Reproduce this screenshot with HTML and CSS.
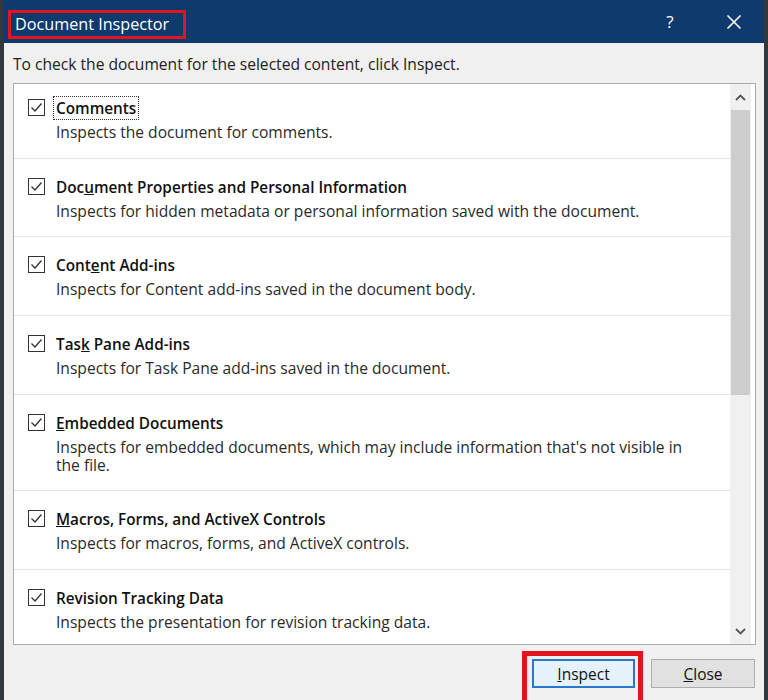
FILE: index.html
```html
<!DOCTYPE html>
<html>
<head>
<meta charset="utf-8">
<link rel="stylesheet" href="styles.css">
</head>
<body>
<div class="dialog">
  <div class="titlebar">
    <span class="title-mark">Document Inspector</span>
    <span class="spacer"></span>
    <span class="help">?</span>
    <span class="close-x">
      <svg width="16" height="16" viewBox="0 0 16 16"><path d="M1.5 1.5 L14.5 14.5 M14.5 1.5 L1.5 14.5" stroke="#ffffff" stroke-width="1.6" fill="none"/></svg>
    </span>
  </div>
  <div class="intro">To check the document for the selected content, click Inspect.</div>
  <div class="list">
    <div class="items">
      <div class="item first">
        <span class="cb"><svg width="17" height="17" viewBox="0 0 17 17"><rect x="0.5" y="0.5" width="16" height="16" fill="#fff" stroke="#333" stroke-width="1"/><path d="M3.5 8.5 L7 12 L13.5 4.5" stroke="#333" stroke-width="1.3" fill="none"/></svg></span>
        <div class="text">
          <div class="name"><span class="focus">Comments</span></div>
          <div class="desc">Inspects the document for comments.</div>
        </div>
      </div>
      <div class="item">
        <span class="cb"><svg width="17" height="17" viewBox="0 0 17 17"><rect x="0.5" y="0.5" width="16" height="16" fill="#fff" stroke="#333" stroke-width="1"/><path d="M3.5 8.5 L7 12 L13.5 4.5" stroke="#333" stroke-width="1.3" fill="none"/></svg></span>
        <div class="text">
          <div class="name">Doc<u>u</u>ment Properties and Personal Information</div>
          <div class="desc">Inspects for hidden metadata or personal information saved with the document.</div>
        </div>
      </div>
      <div class="item">
        <span class="cb"><svg width="17" height="17" viewBox="0 0 17 17"><rect x="0.5" y="0.5" width="16" height="16" fill="#fff" stroke="#333" stroke-width="1"/><path d="M3.5 8.5 L7 12 L13.5 4.5" stroke="#333" stroke-width="1.3" fill="none"/></svg></span>
        <div class="text">
          <div class="name">Cont<u>e</u>nt Add-ins</div>
          <div class="desc">Inspects for Content add-ins saved in the document body.</div>
        </div>
      </div>
      <div class="item">
        <span class="cb"><svg width="17" height="17" viewBox="0 0 17 17"><rect x="0.5" y="0.5" width="16" height="16" fill="#fff" stroke="#333" stroke-width="1"/><path d="M3.5 8.5 L7 12 L13.5 4.5" stroke="#333" stroke-width="1.3" fill="none"/></svg></span>
        <div class="text">
          <div class="name">Tas<u>k</u> Pane Add-ins</div>
          <div class="desc">Inspects for Task Pane add-ins saved in the document.</div>
        </div>
      </div>
      <div class="item">
        <span class="cb"><svg width="17" height="17" viewBox="0 0 17 17"><rect x="0.5" y="0.5" width="16" height="16" fill="#fff" stroke="#333" stroke-width="1"/><path d="M3.5 8.5 L7 12 L13.5 4.5" stroke="#333" stroke-width="1.3" fill="none"/></svg></span>
        <div class="text">
          <div class="name"><u>E</u>mbedded Documents</div>
          <div class="desc">Inspects for embedded documents, which may include information that's not visible in the file.</div>
        </div>
      </div>
      <div class="item">
        <span class="cb"><svg width="17" height="17" viewBox="0 0 17 17"><rect x="0.5" y="0.5" width="16" height="16" fill="#fff" stroke="#333" stroke-width="1"/><path d="M3.5 8.5 L7 12 L13.5 4.5" stroke="#333" stroke-width="1.3" fill="none"/></svg></span>
        <div class="text">
          <div class="name"><u>M</u>acros, Forms, and ActiveX Controls</div>
          <div class="desc">Inspects for macros, forms, and ActiveX controls.</div>
        </div>
      </div>
      <div class="item last">
        <span class="cb"><svg width="17" height="17" viewBox="0 0 17 17"><rect x="0.5" y="0.5" width="16" height="16" fill="#fff" stroke="#333" stroke-width="1"/><path d="M3.5 8.5 L7 12 L13.5 4.5" stroke="#333" stroke-width="1.3" fill="none"/></svg></span>
        <div class="text">
          <div class="name">Revision Tracking Data</div>
          <div class="desc">Inspects the presentation for revision tracking data.</div>
        </div>
      </div>
    </div>
    <div class="scrollbar">
      <div class="arrow up"><svg width="11" height="7" viewBox="0 0 11 7"><path d="M1 6 L5.5 1.5 L10 6" stroke="#555" stroke-width="1.8" fill="none"/></svg></div>
      <div class="thumb"></div>
      <div class="track"></div>
      <div class="arrow down"><svg width="11" height="7" viewBox="0 0 11 7"><path d="M1 1 L5.5 5.5 L10 1" stroke="#555" stroke-width="1.8" fill="none"/></svg></div>
    </div>
  </div>
  <div class="footer">
    <div class="mark-box"><button class="btn primary"><u>I</u>nspect</button></div>
    <button class="btn"><u>C</u>lose</button>
  </div>
</div>
</body>
</html>
```
FILE: styles.css
```css
html, body {
  margin: 0;
  padding: 0;
  height: 700px;
  overflow: hidden;
  background: #34383c;
  font-family: "Open Sans", "Noto Sans", sans-serif;
}
.dialog {
  width: 760px;
  height: 700px;
  margin-left: 4px;
  background: #f0f0f0;
  display: flex;
  flex-direction: column;
}
.titlebar {
  height: 43px;
  flex-shrink: 0;
  background: #0f3a6d;
  display: flex;
  align-items: center;
  color: #fff;
  margin-left: -1px;
}
.title-mark {
  margin-left: 5px;
  margin-top: 6px;
  border: 3px solid #e3141c;
  padding: 1px 14px 1px 4px;
  font-size: 16.2px;
  line-height: 21px;
  color: #fff;
}
.spacer { flex: 1; }
.help {
  font-size: 17px;
  width: 20px;
  margin-right: 46px;
  text-align: center;
}
.close-x {
  display: flex;
  width: 16px;
  margin-right: 22px;
}
.intro {
  flex-shrink: 0;
  font-size: 15.6px;
  line-height: 20px;
  color: #222;
  padding: 11px 0 0 9px;
  height: 29px;
}
.list {
  flex-shrink: 0;
  margin-left: 9px;
  width: 741px;
  height: 560px;
  border: 1px solid #a9a9a9;
  background: #fff;
  display: flex;
  overflow: hidden;
}
.items {
  flex: 1;
  overflow: hidden;
}
.item {
  display: flex;
  padding: 16px 0 16.7px 14px;
  border-top: 1px solid #e4e4e4;
}
.item.first {
  border-top: none;
  padding-top: 12px;
}
.cb {
  width: 17px;
  height: 17px;
  margin-top: 3px;
  margin-right: 11px;
  display: flex;
}
.text { flex: 1; padding-right: 20px; }
.name {
  font-size: 15.3px;
  font-weight: 600;
  line-height: 24px;
  color: #111;
}
.focus {
  outline: 1px dotted #333;
  outline-offset: 1px;
  padding: 0 1px;
  margin-left: -1px;
}
.desc {
  font-size: 15.6px;
  line-height: 18px;
  margin-top: 3px;
  color: #2a2a2a;
}
.scrollbar {
  width: 21px;
  margin-right: 4px;
  background: #f0f0f0;
  display: flex;
  flex-direction: column;
}
.arrow {
  height: 26px;
  display: flex;
  align-items: center;
  justify-content: center;
}
.thumb {
  height: 285px;
  margin: 0 1px 0 1px;
  background: #cdcdcd;
}
.track { flex: 1; }
.footer {
  display: flex;
  justify-content: flex-end;
  align-items: flex-start;
  padding: 6px 9px 0 0;
  gap: 8px;
}
.mark-box {
  border: 5px solid #e3141c;
  padding: 3px 3px 30px 5px;
}
.btn {
  width: 104px;
  height: 29px;
  font-family: "Open Sans", "Noto Sans", sans-serif;
  font-size: 15.5px;
  color: #111;
  background: #e1e1e1;
  border: 1px solid #adadad;
  padding: 0;
  margin: 0;
}
.footer > .btn { margin-top: 8px; }
.btn.primary {
  width: 103px;
  background: #e5f1fb;
  border: 2px solid #2878d0;
}
```
